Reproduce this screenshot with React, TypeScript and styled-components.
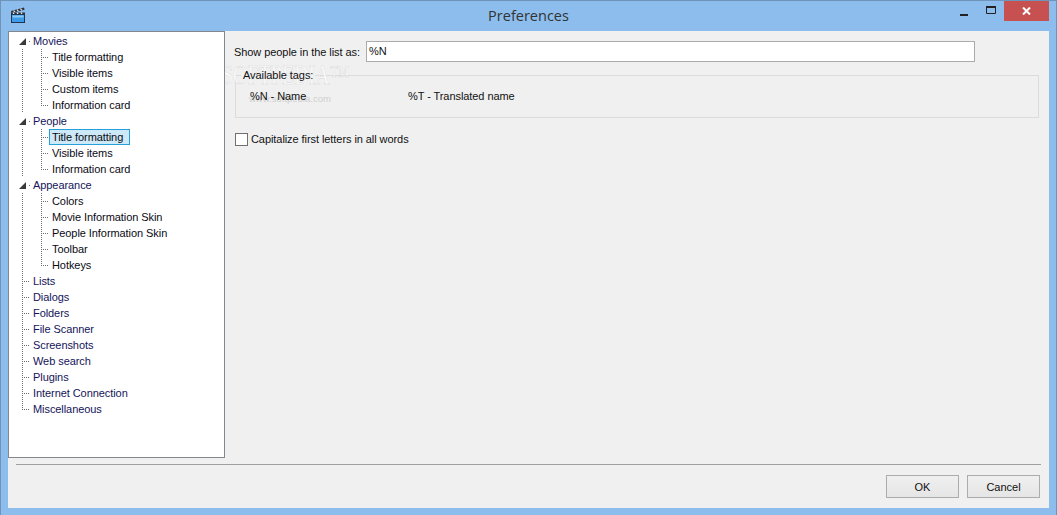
import React from "react";
import styled, { createGlobalStyle } from "styled-components";

const Global = createGlobalStyle`
  html, body { margin: 0; padding: 0; background: #8cbdec; }
  body { width: 1057px; height: 515px; overflow: hidden; }
  * { box-sizing: border-box; }
`;

const Frame = styled.div`
  position: relative;
  width: 1057px;
  height: 515px;
  display: flex;
  flex-direction: column;
  background: #8cbdec;
  border: 1px solid #6f94ba;
  border-bottom: 0;
  padding: 0 7px 7px;
  font-family: "Liberation Sans", Arial, sans-serif;
  font-size: 11px;
  letter-spacing: -0.07px;
  color: #111;
`;

const TitleBar = styled.header`
  position: relative;
  flex: 0 0 30px;
  display: flex;
  align-items: center;
  justify-content: center;
  padding-bottom: 2px;
`;

const AppIcon = styled.svg`
  position: absolute;
  left: 2px;
  top: 6px;
`;

const Title = styled.h1`
  margin: 0;
  font-family: "Open Sans", sans-serif;
  font-size: 14.5px;
  font-weight: 400;
  letter-spacing: 0;
  color: #333;
`;

const WindowButtons = styled.div`
  position: absolute;
  right: -7px;
  top: 0;
  display: flex;
  align-items: flex-start;
`;

const CaptionButton = styled.div<{ $width: number }>`
  width: ${(p) => p.$width}px;
  height: 20px;
  display: flex;
  align-items: center;
  justify-content: center;
`;

const CloseButton = styled(CaptionButton)`
  background: #c75050;
`;

const MinGlyph = styled.svg`
  margin-top: 7px;
`;

const MaxGlyph = styled.svg`
  margin-top: -2px;
`;

const Client = styled.main`
  flex: 1;
  display: flex;
  flex-direction: column;
  background: #f0f0f0;
  min-height: 0;
`;

const Body = styled.div`
  flex: 0 0 427px;
  display: flex;
`;

const TreePanel = styled.nav`
  position: relative;
  z-index: 1;
  flex: 0 0 217px;
  background: #fff;
  border: 1px solid #828790;
  padding-top: 1px;
`;

const Row = styled.div`
  display: flex;
  height: 16px;
  line-height: 16px;
  padding-left: 2px;
`;

type GuideKind = "pipe" | "tee" | "elbow" | "stub";

const dotV = "repeating-linear-gradient(180deg, #6e6e6e 0 1px, transparent 1px 2px)";
const dotH = "repeating-linear-gradient(90deg, #6e6e6e 0 1px, transparent 1px 2px)";

const guideBackground: Record<GuideKind, string> = {
  pipe: `background-image: ${dotV}; background-size: 1px 16px; background-position: 11px 0;`,
  tee: `background-image: ${dotV}, ${dotH}; background-size: 1px 16px, 8px 1px; background-position: 11px 0, 11px 8px;`,
  elbow: `background-image: ${dotV}, ${dotH}; background-size: 1px 9px, 8px 1px; background-position: 11px 0, 11px 8px;`,
  stub: `background-image: ${dotH}; background-size: 1px 1px; background-position: 18px 8px;`,
};

const Guide = styled.span<{ $kind?: GuideKind }>`
  position: relative;
  flex: 0 0 19px;
  height: 16px;
  display: block;
  background-repeat: no-repeat;
  ${(p) => (p.$kind ? guideBackground[p.$kind] : "")}
`;

const Expander = styled.svg`
  position: absolute;
  left: 8px;
  top: 5px;
`;

const RootLabel = styled.span`
  padding: 0 3px;
  height: 16px;
  white-space: nowrap;
  color: #14145a;
`;

const ChildLabel = styled.span<{ $selected?: boolean }>`
  padding: ${(p) => (p.$selected ? "0 6px 0 2px" : "0 3px")};
  height: 16px;
  line-height: ${(p) => (p.$selected ? 14 : 16)}px;
  white-space: nowrap;
  color: #0a0a14;
  border: ${(p) => (p.$selected ? "1px solid #26a0da" : "0")};
  background: ${(p) => (p.$selected ? "#cde8f6" : "transparent")};
`;

const Panel = styled.section`
  flex: 1;
  padding: 10px 10px 0 9px;
`;

const FieldRow = styled.div`
  display: flex;
  align-items: center;
  height: 21px;
`;

const FieldLabel = styled.label`
  flex: 0 0 132px;
  white-space: nowrap;
`;

const TextInput = styled.div`
  width: 609px;
  height: 21px;
  line-height: 19px;
  background: #fff;
  border: 1px solid #ababab;
  padding: 0 2px;
`;

const TagGroup = styled.fieldset`
  margin: 7px 0 0 1px;
  padding: 0;
  height: 49px;
  width: 804px;
  border: 1px solid #dcdcdc;
  display: flex;
`;

const TagLegend = styled.legend`
  position: relative;
  z-index: 1;
  margin-left: 5px;
  padding: 0 2px;
  line-height: 12px;
`;

const TagList = styled.div`
  display: flex;
  padding: 7px 0 0 14px;
`;

const Tag = styled.span`
  position: relative;
  z-index: 1;
  flex: 0 0 158px;
  line-height: 16px;
`;

const CheckRow = styled.label`
  display: flex;
  align-items: center;
  gap: 3px;
  margin: 14px 0 0 1px;
  height: 14px;
`;

const CheckBox = styled.span`
  width: 13px;
  height: 13px;
  background: #fff;
  border: 1px solid #707070;
`;

const Footer = styled.footer`
  flex: 1;
  display: flex;
  flex-direction: column;
  padding: 6px 8px 0;
`;

const Separator = styled.hr`
  width: 1025px;
  margin: 0;
  border: 0;
  height: 1px;
  background: #a0a0a0;
`;

const Buttons = styled.div`
  display: flex;
  justify-content: flex-end;
  gap: 8px;
  margin-top: 10px;
  padding-right: 1px;
`;

const Button = styled.button`
  width: 73px;
  height: 23px;
  padding: 0;
  font: inherit;
  color: #111;
  background: linear-gradient(#f0f0f0, #e5e5e5);
  border: 1px solid #acacac;
`;

const Watermark = styled.div`
  position: absolute;
  left: 221px;
  top: 59px;
  font-family: "Liberation Serif", serif;
  font-size: 27px;
  letter-spacing: 0;
  transform: scaleX(0.74);
  transform-origin: left center;
  color: rgba(255, 255, 255, 0.9);
  -webkit-text-stroke: 0.5px rgba(185, 185, 185, 0.5);
  pointer-events: none;
`;

const WatermarkUrl = styled.div`
  position: absolute;
  left: 248px;
  top: 92px;
  font-size: 9.5px;
  letter-spacing: 0;
  color: rgba(170, 170, 170, 0.5);
  pointer-events: none;
`;

type Node = { label: string; children?: string[]; selected?: number };

const tree: Node[] = [
  { label: "Movies", children: ["Title formatting", "Visible items", "Custom items", "Information card"] },
  { label: "People", children: ["Title formatting", "Visible items", "Information card"], selected: 0 },
  {
    label: "Appearance",
    children: ["Colors", "Movie Information Skin", "People Information Skin", "Toolbar", "Hotkeys"],
  },
  { label: "Lists" },
  { label: "Dialogs" },
  { label: "Folders" },
  { label: "File Scanner" },
  { label: "Screenshots" },
  { label: "Web search" },
  { label: "Plugins" },
  { label: "Internet Connection" },
  { label: "Miscellaneous" },
];

function Clapper() {
  return (
    <AppIcon width="16" height="17" viewBox="0 0 16 17">
      <path d="M1 4 14 .5l.6 2.2L1.6 6.2z" fill="#2a3340" />
      <path d="M3.6 3.6 5 5.2M7 2.6l1.5 1.7M10.4 1.7 12 3.4" stroke="#e8e8e8" strokeWidth="1.2" />
      <rect x="1" y="5.5" width="14" height="2.5" fill="#2a3340" />
      <path d="M3 5.5 4.5 8M7 5.5 8.5 8M11 5.5 12.5 8" stroke="#f0f0f0" strokeWidth="1.2" />
      <rect x="1.5" y="7.5" width="13" height="8" fill="#3f9be8" stroke="#22344f" />
      <rect x="2.5" y="8.5" width="11" height="2" fill="#8cc8f4" />
    </AppIcon>
  );
}

function TreeRows() {
  return (
    <>
      {tree.map((node, i) => {
        const last = i === tree.length - 1;
        return (
          <React.Fragment key={node.label}>
            <Row>
              {node.children ? (
                <Guide $kind="stub">
                  <Expander width="7" height="7" viewBox="0 0 7 7">
                    <path d="M0 7 7 0v7z" fill="#3a3a3a" />
                  </Expander>
                </Guide>
              ) : (
                <Guide $kind={last ? "elbow" : "tee"} />
              )}
              <RootLabel>{node.label}</RootLabel>
            </Row>
            {node.children?.map((child, j) => (
              <Row key={child}>
                <Guide $kind="pipe" />
                <Guide $kind={j === node.children!.length - 1 ? "elbow" : "tee"} />
                <ChildLabel $selected={node.selected === j}>{child}</ChildLabel>
              </Row>
            ))}
          </React.Fragment>
        );
      })}
    </>
  );
}

export default function App() {
  return (
    <>
      <Global />
      <Frame>
        <TitleBar>
          <Clapper />
          <Title>Preferences</Title>
          <WindowButtons>
            <CaptionButton $width={26}>
              <MinGlyph width="8" height="2" viewBox="0 0 8 2">
                <rect width="8" height="2" fill="#222" />
              </MinGlyph>
            </CaptionButton>
            <CaptionButton $width={27}>
              <MaxGlyph width="10" height="8" viewBox="0 0 10 8">
                <path d="M.5 1.5h9v6h-9z" fill="none" stroke="#222" />
                <rect width="10" height="2" fill="#222" />
              </MaxGlyph>
            </CaptionButton>
            <CloseButton $width={45}>
              <svg width="9" height="8" viewBox="0 0 9 8">
                <path d="M1 .5 8 7.5M8 .5 1 7.5" stroke="#fff" strokeWidth="2" />
              </svg>
            </CloseButton>
            <CaptionButton $width={7} />
          </WindowButtons>
        </TitleBar>
        <Client>
          <Body>
            <TreePanel>
              <TreeRows />
            </TreePanel>
            <Panel>
              <FieldRow>
                <FieldLabel>Show people in the list as:</FieldLabel>
                <TextInput>%N</TextInput>
              </FieldRow>
              <TagGroup>
                <TagLegend>Available tags:</TagLegend>
                <TagList>
                  <Tag>%N - Name</Tag>
                  <Tag>%T - Translated name</Tag>
                </TagList>
              </TagGroup>
              <CheckRow>
                <CheckBox />
                Capitalize first letters in all words
              </CheckRow>
            </Panel>
          </Body>
          <Footer>
            <Separator />
            <Buttons>
              <Button>OK</Button>
              <Button>Cancel</Button>
            </Buttons>
          </Footer>
        </Client>
        <Watermark>SOFTPEDIA™</Watermark>
        <WatermarkUrl>www.softpedia.com</WatermarkUrl>
      </Frame>
    </>
  );
}
